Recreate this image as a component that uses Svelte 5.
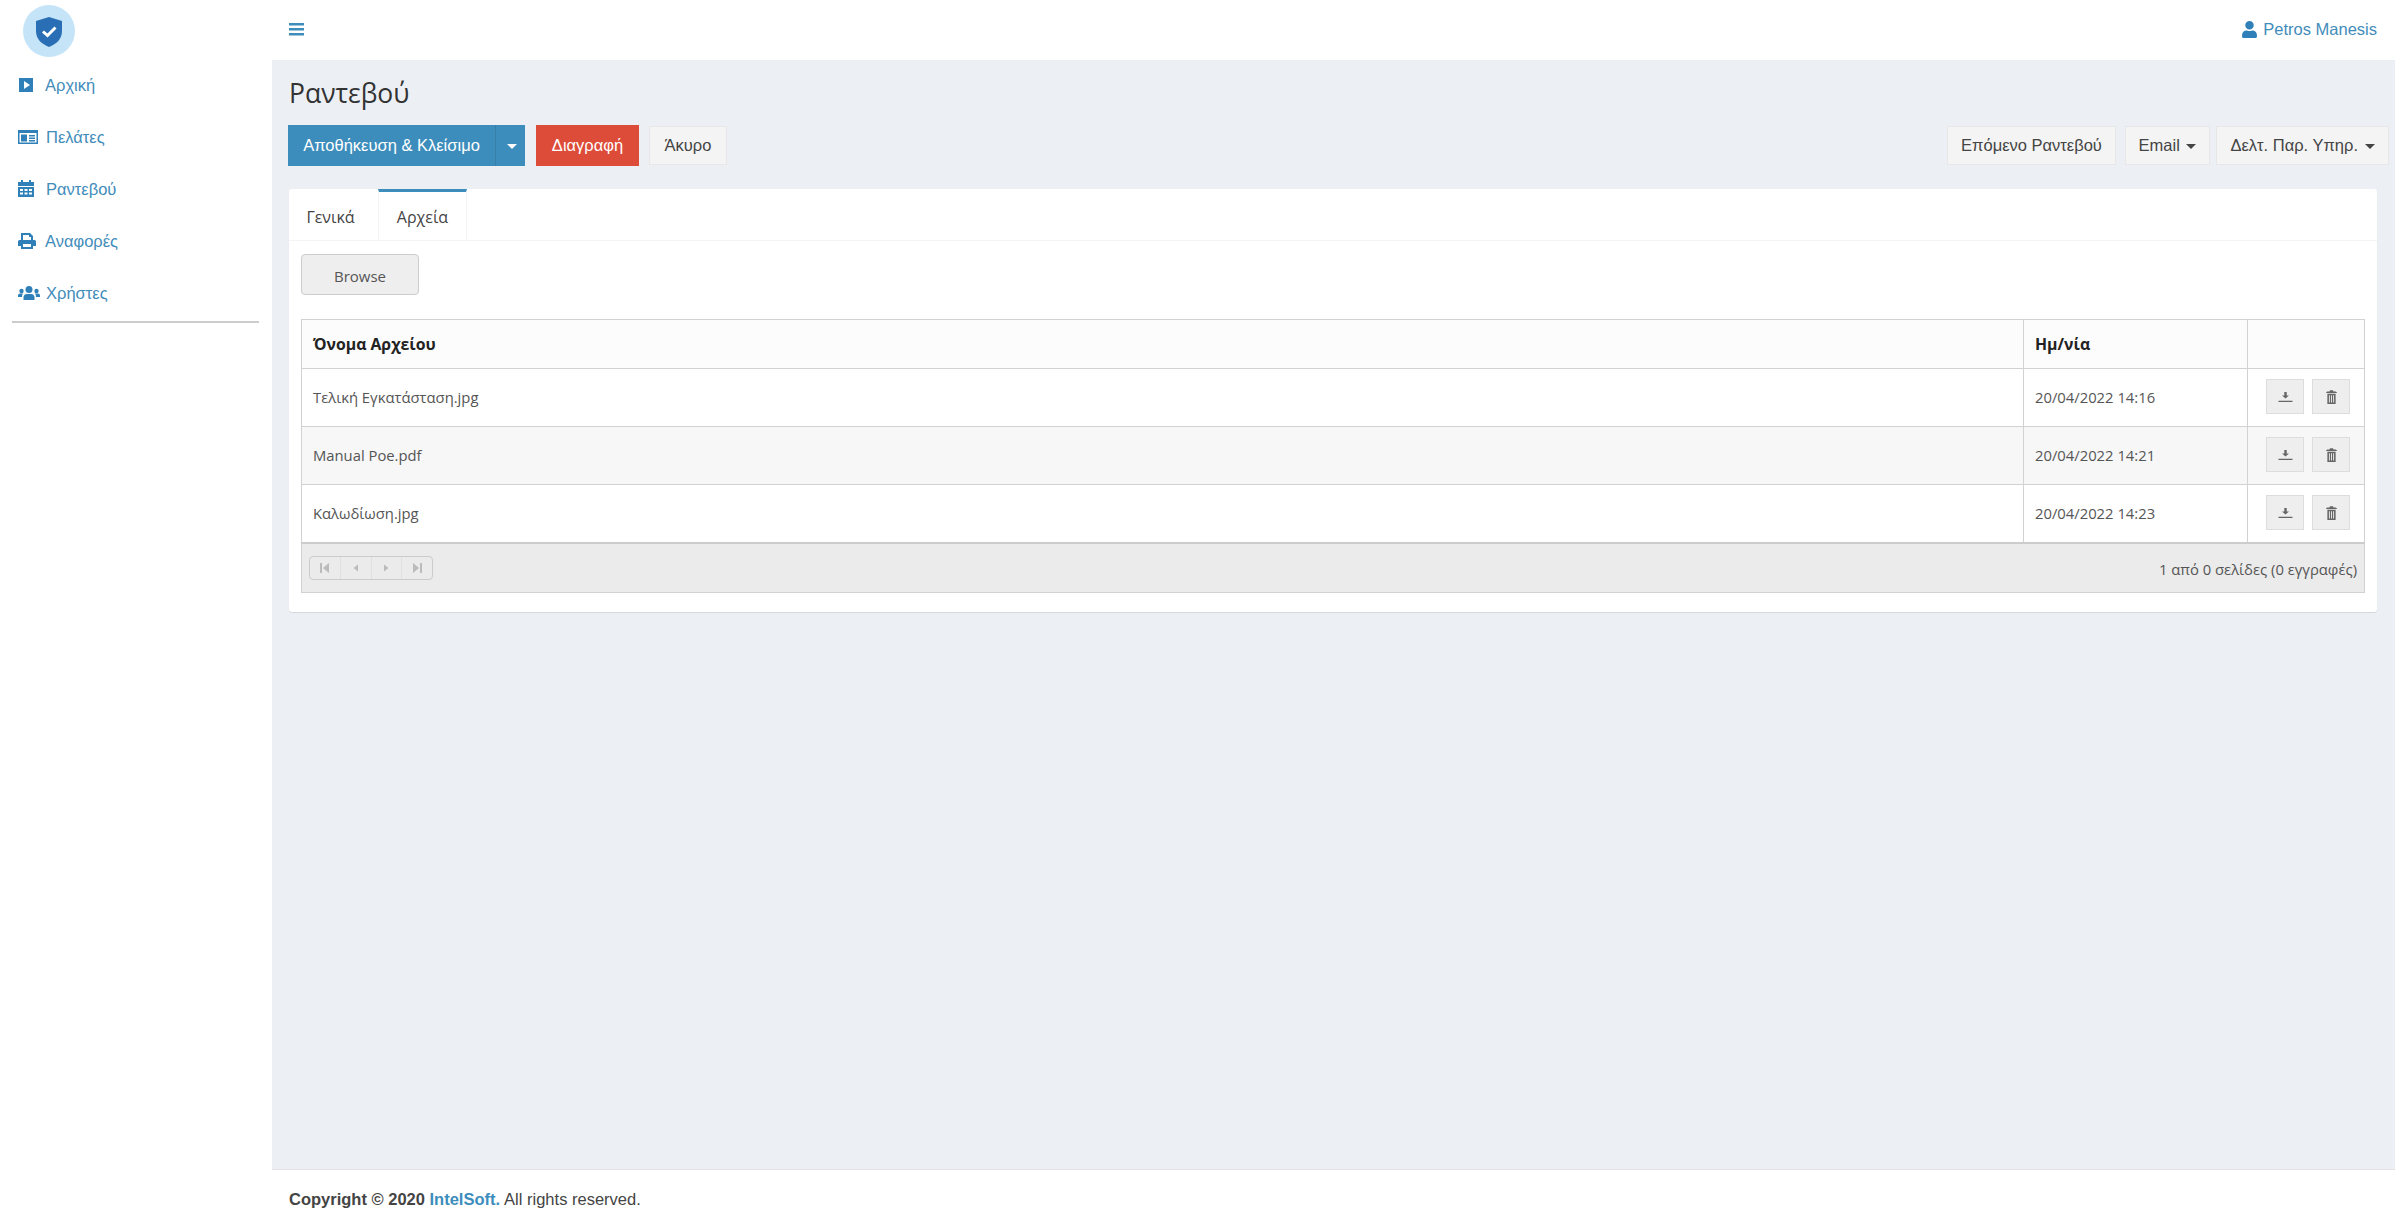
<script>
	const menu = [
		{ label: 'Αρχική', icon: 'play', gap: 11 },
		{ label: 'Πελάτες', icon: 'card', gap: 8 },
		{ label: 'Ραντεβού', icon: 'calendar', gap: 12 },
		{ label: 'Αναφορές', icon: 'print', gap: 9 },
		{ label: 'Χρήστες', icon: 'users', gap: 6 }
	];

	const files = [
		{ name: 'Τελική Εγκατάσταση.jpg', date: '20/04/2022 14:16' },
		{ name: 'Manual Poe.pdf', date: '20/04/2022 14:21' },
		{ name: 'Καλωδίωση.jpg', date: '20/04/2022 14:23' }
	];
</script>

<div class="layout">
	<aside class="sidebar">
		<div class="logo">
			<svg viewBox="0 0 52 52" width="52" height="52" aria-hidden="true">
				<circle cx="26" cy="26" r="26" fill="#c5e4f8" />
				<path d="M26 12l13 4v10c0 8-5.500 13-13 16-7.500-3-13-8-13-16V16z" fill="#2a6fb5" />
				<path d="M20 26.500l4.500 4 8-8" fill="none" stroke="#fff" stroke-width="3" />
			</svg>
		</div>
		<nav class="menu">
			{#each menu as item}
				<a class="menu-item" href="#top">
					<span class="menu-icon" style="margin-right: {item.gap}px">
						{#if item.icon === 'play'}
							<svg viewBox="0 0 16 16" width="16" height="16"><path fill-rule="evenodd" d="M1 1h14v14H1zM6 4v8l6-4z" /></svg>
						{:else if item.icon === 'card'}
							<svg viewBox="0 0 20 16" width="20" height="16"><path fill-rule="evenodd" d="M0 1h20v14H0zM1.500 4v9.500h17V4zM3 5.500h6v7H3zM11 6h6v1.500h-6zM11 8.500h6V10h-6zM11 11h6v1.500h-6z" /></svg>
						{:else if item.icon === 'calendar'}
							<svg viewBox="0 0 16 18" width="16" height="18"><path fill-rule="evenodd" d="M3 0h2v2h6V0h2v2h3v4H0V2h3zM0 7h16v10H0zM2 9v2h3V9zM6.500 9v2h3V9zM11 9v2h3V9zM2 12.500v2h3v-2zM6.500 12.500v2h3v-2zM11 12.500v2h3v-2z" /></svg>
						{:else if item.icon === 'print'}
							<svg viewBox="0 0 18 16" width="18" height="16"><path fill-rule="evenodd" d="M3 0h9l3 3v4h1.500A1.500 1.500 0 0 1 18 8.500V13h-3v3H3v-3H0V8.500A1.500 1.500 0 0 1 1.500 7H3zM5 2v5h8V4h-2V2zM5 11v3h8v-3z" /></svg>
						{:else}
							<svg viewBox="0 0 22 16" width="22" height="16"><circle cx="11" cy="4.500" r="3.500" /><circle cx="3.500" cy="6" r="2.200" /><circle cx="18.500" cy="6" r="2.200" /><path d="M5.500 15v-2.500A3.500 3.500 0 0 1 9 9h4a3.500 3.500 0 0 1 3.500 3.500V15zM0 12v-1.500A2 2 0 0 1 2 8.500h3A5 5 0 0 0 4 12zM22 12v-1.500a2 2 0 0 0-2-2h-3a5 5 0 0 1 1 3.500z" /></svg>
						{/if}
					</span>
					{item.label}
				</a>
			{/each}
		</nav>
		<hr class="menu-line" />
	</aside>

	<div class="main">
		<header class="topbar">
			<svg class="burger" viewBox="0 0 15 13" width="15" height="13" aria-hidden="true"><path d="M0 0h15v2.500H0zM0 5h15v2.500H0zM0 10h15v2.500H0z" /></svg>
			<a class="user" href="#top">
				<svg viewBox="0 0 448 512" width="15" height="17" aria-hidden="true"><path d="M224 256c70.700 0 128-57.300 128-128S294.700 0 224 0 96 57.300 96 128s57.300 128 128 128zm89.600 32h-16.700c-22.200 10.200-46.900 16-72.900 16s-50.600-5.800-72.900-16h-16.700C60.200 288 0 348.200 0 422.400V464c0 26.500 21.500 48 48 48h352c26.500 0 48-21.500 48-48v-41.600c0-74.200-60.200-134.400-134.400-134.400z" /></svg>
				Petros Manesis
			</a>
		</header>

		<main class="content">
			<h1>Ραντεβού</h1>
			<div class="toolbar">
				<div class="split">
					<button class="btn primary save">Αποθήκευση &amp; Κλείσιμο</button>
					<button class="btn primary toggle" aria-label="Περισσότερα"><span class="caret"></span></button>
				</div>
				<button class="btn danger">Διαγραφή</button>
				<button class="btn plain cancel">Άκυρο</button>
				<div class="right-tools">
					<button class="btn plain next">Επόμενο Ραντεβού</button>
					<button class="btn plain email">Email <span class="caret"></span></button>
					<button class="btn plain report">Δελτ. Παρ. Υπηρ. <span class="caret"></span></button>
				</div>
			</div>

			<section class="card">
				<div class="tabs">
					<span class="tab first">Γενικά</span>
					<span class="tab active">Αρχεία</span>
				</div>
				<div class="card-body">
					<button class="browse"><span>Browse</span></button>
					<table>
						<colgroup>
							<col />
							<col class="col-date" />
							<col class="col-actions" />
						</colgroup>
						<thead>
							<tr>
								<th>Όνομα Αρχείου</th>
								<th>Ημ/νία</th>
								<th></th>
							</tr>
						</thead>
						<tbody>
							{#each files as file}
								<tr>
									<td>{file.name}</td>
									<td>{file.date}</td>
									<td class="actions">
										<div class="action-row">
											<button class="icon-btn" aria-label="Λήψη">
												<svg viewBox="0 0 14 10" width="15" height="10"><path d="M5.800 0h2.400v3.500h2.300L7 6.500 3.500 3.500h2.300zM0 8.700h14V10H0z" /></svg>
											</button>
											<button class="icon-btn" aria-label="Διαγραφή">
												<svg viewBox="0 0 12 15" width="11" height="14"><path fill-rule="evenodd" d="M4.500 0h3l.8 1.500H10c1 0 1.800.6 2 1.500H0c.2-.9 1-1.500 2-1.500h1.700zM1.500 4h9v11h-9zM3.200 5.500v8h1v-8zM5.500 5.500v8h1v-8zM7.800 5.500v8h1v-8z" /></svg>
											</button>
										</div>
									</td>
								</tr>
							{/each}
						</tbody>
					</table>
					<div class="pager-bar">
						<div class="pager">
							<span><svg viewBox="0 0 10 10" width="10" height="10"><path d="M0 0h2v10H0zM9 0v10L3 5z" /></svg></span>
							<span><svg viewBox="0 0 10 10" width="10" height="10"><path d="M7 1.500v7L2.500 5z" /></svg></span>
							<span><svg viewBox="0 0 10 10" width="10" height="10"><path d="M3 1.500v7L7.500 5z" /></svg></span>
							<span><svg viewBox="0 0 10 10" width="10" height="10"><path d="M10 0H8v10h2zM1 0v10l6-5z" /></svg></span>
						</div>
						<div class="pager-info">1 από 0 σελίδες (0 εγγραφές)</div>
					</div>
				</div>
			</section>
		</main>

		<footer class="footer">
			<strong>Copyright © 2020 <a href="#top">IntelSoft.</a></strong> All rights reserved.
		</footer>
	</div>
</div>

<style>
	:global(body) {
		margin: 0;
		background: #fff;
	}

	.layout {
		display: flex;
		height: 1229px;
		font-family: 'Liberation Sans', Arial, sans-serif;
		color: #444;
		overflow: hidden;
	}

	/* Sidebar */
	.sidebar {
		width: 272px;
		flex: none;
		padding: 5px 13px 0 12px;
		box-sizing: border-box;
	}

	.logo {
		height: 54px;
		padding-left: 11px;
	}

	.menu {
		display: flex;
		flex-direction: column;
	}

	.menu-item {
		display: flex;
		align-items: center;
		height: 52px;
		padding-left: 6px;
		color: #428cba;
		font-size: 16.5px;
		text-decoration: none;
	}

	.menu-icon {
		display: flex;
		fill: #2f80b8;
	}

	.menu-line {
		margin: 2px 0 0;
		border: 0;
		border-top: 2px solid #ccc;
	}

	/* Top bar */
	.main {
		flex: 1;
		min-width: 0;
		display: flex;
		flex-direction: column;
	}

	.topbar {
		height: 60px;
		flex: none;
		display: flex;
		align-items: center;
		justify-content: space-between;
		padding: 0 18px 0 17px;
		box-sizing: border-box;
	}

	.burger {
		fill: #3c8dbc;
		margin-top: -2px;
	}

	.user {
		display: flex;
		align-items: center;
		gap: 6px;
		color: #428cba;
		font-size: 16.5px;
		text-decoration: none;
		fill: #2f80b8;
		margin-top: -2px;
	}

	/* Content */
	.content {
		flex: 1;
		background: #ecf0f5;
		padding: 14px 7px 0 17px;
	}

	h1 {
		margin: 0;
		height: 51px;
		font-family: 'Open Sans', sans-serif;
		font-size: 26.5px;
		font-weight: 400;
		line-height: 38px;
		color: #333;
	}

	.toolbar {
		display: flex;
		align-items: center;
		height: 41px;
		margin-left: -1px;
		gap: 11px;
	}

	.split {
		display: flex;
	}

	.btn {
		height: 41px;
		border: 0;
		padding: 0;
		font-family: inherit;
		font-size: 16.5px;
		white-space: nowrap;
	}

	.primary {
		background: #3c8dbc;
		color: #fff;
	}

	.save {
		width: 208px;
		border-right: 1px solid #367fa9;
	}

	.toggle {
		width: 29px;
	}

	.danger {
		width: 103px;
		background: #dd4b39;
		color: #fff;
	}

	.plain {
		background: #f4f4f4;
		border: 1px solid #e7e7e7;
		color: #444;
		height: 39px;
	}

	.cancel {
		width: 78px;
		margin-left: -1px;
	}

	.right-tools {
		margin-left: auto;
		margin-right: -1px;
		display: flex;
	}

	.next {
		width: 169px;
		margin-right: 9px;
	}

	.email {
		width: 85px;
		margin-right: 6px;
	}

	.report {
		width: 173px;
	}

	.caret {
		display: inline-block;
		width: 0;
		height: 0;
		margin-left: 2px;
		vertical-align: middle;
		border-top: 5px solid;
		border-left: 5px solid transparent;
		border-right: 5px solid transparent;
	}

	.card {
		margin: 23px 11px 0 0;
		background: #fff;
		border-radius: 3px;
		height: 423px;
		font-family: 'Open Sans', sans-serif;
		box-shadow: 0 1px 1px rgba(0, 0, 0, 0.1);
	}

	.tabs {
		display: flex;
		height: 52px;
		box-sizing: border-box;
		border-bottom: 1px solid #f4f4f4;
		font-size: 16px;
	}

	.tab {
		width: 89px;
		box-sizing: border-box;
		text-align: center;
		padding-top: 14px;
		color: #444;
		border-top: 3px solid transparent;
	}

	.tab.first {
		padding-right: 6px;
	}

	.tab.active {
		border-top-color: #3c8dbc;
		border-right: 1px solid #f4f4f4;
		border-left: 1px solid #f4f4f4;
	}

	.card-body {
		padding: 13px 12px 0;
	}

	.browse {
		display: block;
		width: 118px;
		height: 41px;
		padding: 2px 0 0;
		background: #eee;
		border: 1px solid #ccc;
		border-radius: 4px;
		font-family: inherit;
		font-size: 15px;
		color: #555;
		margin-bottom: 24px;
	}

	table {
		width: 100%;
		table-layout: fixed;
		border-collapse: collapse;
		font-size: 14.8px;
		color: #555;
	}

	.col-date {
		width: 224px;
	}

	.col-actions {
		width: 117px;
	}

	th,
	td {
		border: 1px solid #d2d2d2;
		padding: 0 11px;
		text-align: left;
	}

	th {
		height: 48px;
		background: #fcfcfc;
		font-size: 15.8px;
		color: #222;
		font-weight: 700;
	}

	td {
		height: 55px;
		padding-bottom: 2px;
	}

	tbody tr:nth-child(even) {
		background: #f7f7f7;
	}

	tbody tr:last-child td {
		border-bottom: 2px solid #ccc;
	}

	.actions {
		padding: 0 0 2px;
	}

	.action-row {
		display: flex;
		justify-content: flex-end;
		gap: 8px;
		padding-right: 14px;
	}

	.icon-btn {
		width: 38px;
		height: 35px;
		padding: 0;
		background: #eee;
		border: 1px solid #ddd;
		fill: #666;
		display: flex;
		align-items: center;
		justify-content: center;
	}

	.pager-bar {
		display: flex;
		align-items: center;
		justify-content: space-between;
		height: 49px;
		box-sizing: border-box;
		padding: 0 7px;
		background: #ebebeb;
		border: 1px solid #d2d2d2;
		border-top: 0;
		font-size: 14.8px;
		color: #555;
	}

	.pager-info {
		padding-top: 2px;
	}

	.pager {
		display: flex;
		width: 124px;
		height: 24px;
		box-sizing: border-box;
		border: 1px solid #ccc;
		border-radius: 4px;
	}

	.pager span {
		flex: 1;
		display: flex;
		align-items: center;
		justify-content: center;
		fill: #bbb;
		border-left: 1px solid #e0e0e0;
	}

	.pager span:first-child {
		border-left: 0;
	}

	/* Footer */
	.footer {
		height: 60px;
		flex: none;
		box-sizing: border-box;
		display: flex;
		align-items: center;
		gap: 4px;
		padding: 0 17px;
		font-size: 16.5px;
		color: #444;
		border-top: 1px solid #e4e4e4;
	}

	.footer a {
		color: #3c8dbc;
		text-decoration: none;
	}
</style>
